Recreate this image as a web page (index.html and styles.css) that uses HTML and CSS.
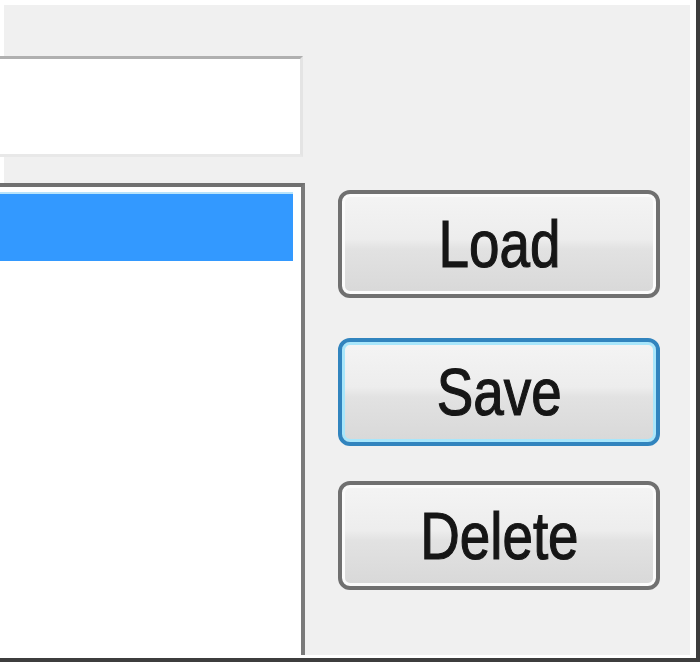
FILE: index.html
```html
<!DOCTYPE html>
<html>
<head>
<meta charset="utf-8">
<link rel="stylesheet" href="styles.css">
</head>
<body>
<div class="window">
  <div class="panel">
    <div class="left">
      <div class="textbox"></div>
      <div class="listbox">
        <div class="item selected"></div>
      </div>
    </div>
    <div class="buttons">
      <button class="btn"><span class="label">Load</span></button>
      <button class="btn focused"><span class="label">Save</span></button>
      <button class="btn delete"><span class="label">Delete</span></button>
    </div>
  </div>
</div>
</body>
</html>
```
FILE: styles.css
```css
html, body {
  margin: 0;
  padding: 0;
  background: #ffffff;
}

.window {
  box-sizing: border-box;
  width: 700px;
  height: 662px;
  background: #ffffff;
  border-right: 4px solid #3d3d3d;
  border-bottom: 4px solid #3d3d3d;
  padding: 5px 6px 3px 0;
}

.panel {
  height: 100%;
  background: #f0f0f0;
  box-shadow: inset 4px 0 0 #ffffff;
  display: flex;
  align-items: stretch;
  overflow: hidden;
}

.left {
  width: 305px;
  display: flex;
  flex-direction: column;
  padding-top: 51px;
}

.textbox {
  box-sizing: border-box;
  width: 303px;
  height: 101px;
  background: #ffffff;
  border-top: 3px solid #b0b0b0;
  border-right: 3px solid #e4e4e4;
  border-bottom: 3px solid #e8e8e8;
}

.listbox {
  box-sizing: border-box;
  margin-top: 26px;
  flex: 1;
  background: #ffffff;
  border-top: 4px solid #707070;
  border-right: 4px solid #7a7a7a;
  padding: 7px 8px 0 0;
}

.item {
  height: 67px;
}

.item.selected {
  background: #3399ff;
  box-shadow: 0 -2px 0 #b9e4fb;
}

.buttons {
  display: flex;
  flex-direction: column;
  margin-left: 33px;
  padding-top: 185px;
}

.btn {
  box-sizing: border-box;
  width: 322px;
  height: 108px;
  margin: 0 0 40px 0;
  padding: 0;
  border: 4px solid #707070;
  border-radius: 12px;
  background: linear-gradient(#f4f4f4 0%, #ededed 45%, #e2e2e2 55%, #d8d8d8 100%);
  box-shadow: inset 0 0 0 3px #fbfbfb;
  display: flex;
  align-items: center;
  justify-content: center;
  font-family: "Liberation Sans", Arial, sans-serif;
  font-size: 66px;
  color: #161616;
  line-height: 1;
}

.btn.focused {
  border-color: #3184be;
  box-shadow: inset 0 0 0 3px #a8e6fb;
  margin-bottom: 35px;
}

.btn.delete {
  height: 109px;
}

.label {
  display: inline-block;
  transform: scaleX(0.83);
  -webkit-text-stroke: 1.2px #161616;
}
```
